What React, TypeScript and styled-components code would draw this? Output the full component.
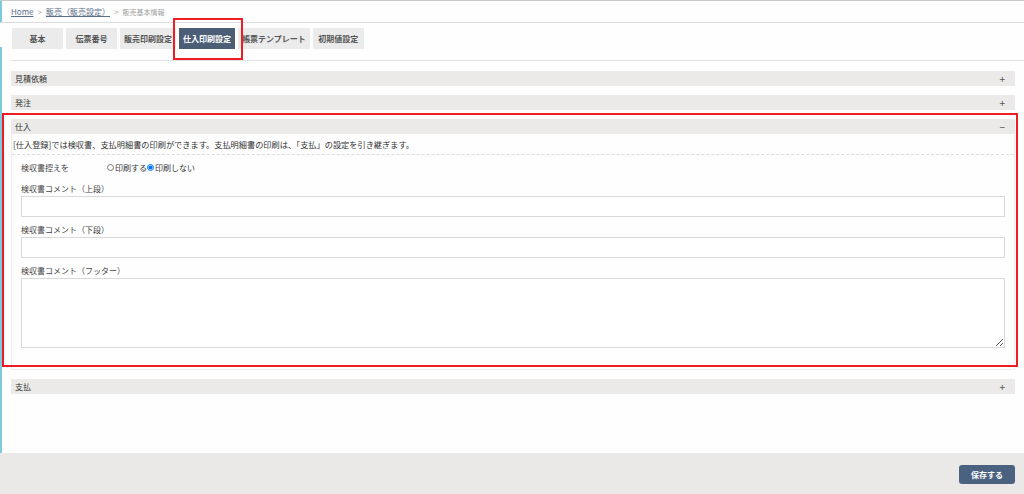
import styled, { createGlobalStyle } from 'styled-components';

const GlobalStyle = createGlobalStyle`
  html, body {
    margin: 0;
    padding: 0;
    background: #fefefe;
  }
  body {
    font-family: "Noto Sans CJK JP", "Noto Sans", sans-serif;
    font-size: 8px;
    color: #333;
  }
  * { box-sizing: border-box; }
`;

const tabs = ['基本', '伝票番号', '販売印刷設定', '仕入印刷設定', '帳票テンプレート', '初期値設定'];
const activeTab = '仕入印刷設定';

const fields = [
  { label: '検収書コメント（上段）', multi: false },
  { label: '検収書コメント（下段）', multi: false },
  { label: '検収書コメント（フッター）', multi: true },
];

const SectionHeader = ({ title, open }: { title: string; open?: boolean }) => (
  <Header>
    <span>{ title }</span>
    <Toggle>{ open ? '−' : '+' }</Toggle>
  </Header>
);

const App = () => {
  return (
    <Page>
      <GlobalStyle />
      <Breadcrumb>
        <Crumb href="#">Home</Crumb>
        <Sep>&gt;</Sep>
        <Crumb href="#">販売（販売設定）</Crumb>
        <Sep>&gt;</Sep>
        <Current>販売基本情報</Current>
      </Breadcrumb>

      <TabBar>
        {tabs.map((t) => (
          <TabButton key={t} $active={t === activeTab}>{ t }</TabButton>
        ))}
      </TabBar>

      <Main>
        <SectionHeader title="見積依頼" />
        <SectionHeader title="発注" />

        <div>
          <SectionHeader title="仕入" open />
          <Panel>
            <Description>
              [仕入登録]では検収書、支払明細書の印刷ができます。支払明細書の印刷は、「支払」の設定を引き継ぎます。
            </Description>
            <FormBody>
              <RadioRow>
                <RowLabel>検収書控えを</RowLabel>
                <RadioLabel>
                  <Radio type="radio" name="copy" />印刷する
                </RadioLabel>
                <RadioLabel>
                  <Radio type="radio" name="copy" defaultChecked />印刷しない
                </RadioLabel>
              </RadioRow>

              {fields.map((f) => (
                <Field key={f.label}>
                  <FieldLabel>{ f.label }</FieldLabel>
                  { f.multi ? <TextArea /> : <TextInput type="text" /> }
                </Field>
              ))}
            </FormBody>
          </Panel>
        </div>

        <SectionHeader title="支払" />
      </Main>

      <Footer>
        <SaveButton>保存する</SaveButton>
      </Footer>

      <Highlight style={{ left: 173, top: 17, width: 70, height: 42 }} />
      <Highlight style={{ left: 2, top: 112, width: 1016, height: 254 }} />
    </Page>
  );
};

export default App;

const Page = styled.div`
  position: relative;
  min-height: 100vh;
  display: flex;
  flex-direction: column;
  border-top: 1px solid #c8c8c8;
  background:
    linear-gradient(to bottom, #7ecadd 0 22px, transparent 22px 46px, #7ecadd 46px)
    left top / 2px 100% no-repeat,
    #fefefe;
`;

const Breadcrumb = styled.div`
  height: 22px;
  padding-left: 11px;
  display: flex;
  align-items: center;
  gap: 4px;
  border-bottom: 1px solid #dcdcdc;
  font-size: 8px;
  color: #999;
`;

const Crumb = styled.a`
  color: #5b6f8d;
  text-decoration: underline;
`;

const Sep = styled.span`
  color: #aaa;
`;

const Current = styled.span`
  color: #a0a0a0;
  font-size: 7px;
`;

const TabBar = styled.div`
  margin-left: 11px;
  padding: 5px 0 11px 1px;
  display: flex;
  gap: 3px;
  border-bottom: 1px solid #e2e2e2;
`;

const TabButton = styled.div<{ $active?: boolean }>`
  height: 21px;
  min-width: 51px;
  padding: 0 4px;
  display: flex;
  align-items: center;
  justify-content: center;
  font-size: 8px;
  font-weight: bold;
  color: ${(p) => (p.$active ? '#fff' : '#555')};
  background-color: ${(p) => (p.$active ? '#4b5e76' : '#ebebeb')};
  white-space: nowrap;
`;

const Main = styled.div`
  flex-grow: 1;
  padding: 10px 9px 0 11px;
  display: flex;
  flex-direction: column;
  gap: 9px;
`;

const Header = styled.div`
  height: 15px;
  padding: 0 10px 0 4px;
  display: flex;
  align-items: center;
  justify-content: space-between;
  background-color: #ebeae8;
  color: #333;
  font-size: 8px;
`;

const Toggle = styled.span`
  font-size: 10px;
  color: #555;
  line-height: 1;
`;

const Panel = styled.div`
  border: 1px solid #eeeeee;
  border-top: none;
`;

const Description = styled.div`
  height: 21px;
  padding: 0 1px;
  display: flex;
  align-items: center;
  border-bottom: 1px dashed #dcdcdc;
  color: #333;
  font-size: 8.2px;
`;

const FormBody = styled.div`
  padding: 3px 9px 21px 9px;
`;

const RadioRow = styled.div`
  height: 18px;
  display: flex;
  align-items: center;
`;

const RowLabel = styled.span`
  width: 86px;
  color: #444;
`;

const RadioLabel = styled.label`
  display: flex;
  align-items: center;
  color: #333;
`;

const Radio = styled.input`
  width: 7px;
  height: 7px;
  margin: 0 1px 0 0;
`;

const Field = styled.div`
  margin-top: 6px;
`;

const FieldLabel = styled.div`
  height: 14px;
  line-height: 14px;
  color: #444;
`;

const TextInput = styled.input`
  display: block;
  width: 100%;
  height: 21px;
  border: 1px solid #d9d9d9;
  border-radius: 0;
  background: #fff;
  outline: none;
`;

const TextArea = styled.textarea`
  display: block;
  width: 100%;
  height: 70px;
  border: 1px solid #d9d9d9;
  border-radius: 0;
  background: #fff;
  resize: both;
`;

const Footer = styled.div`
  height: 41px;
  padding: 12px 9px 0 0;
  display: flex;
  justify-content: flex-end;
  align-items: flex-start;
  background-color: #ebe9e7;
`;

const SaveButton = styled.button`
  width: 56px;
  height: 19px;
  border: none;
  border-radius: 3px;
  background-color: #4b6180;
  color: #fff;
  font-family: inherit;
  font-size: 8px;
  font-weight: bold;
  cursor: pointer;
`;

const Highlight = styled.div`
  position: absolute;
  border: 2px solid #ee1c23;
  pointer-events: none;
`;
